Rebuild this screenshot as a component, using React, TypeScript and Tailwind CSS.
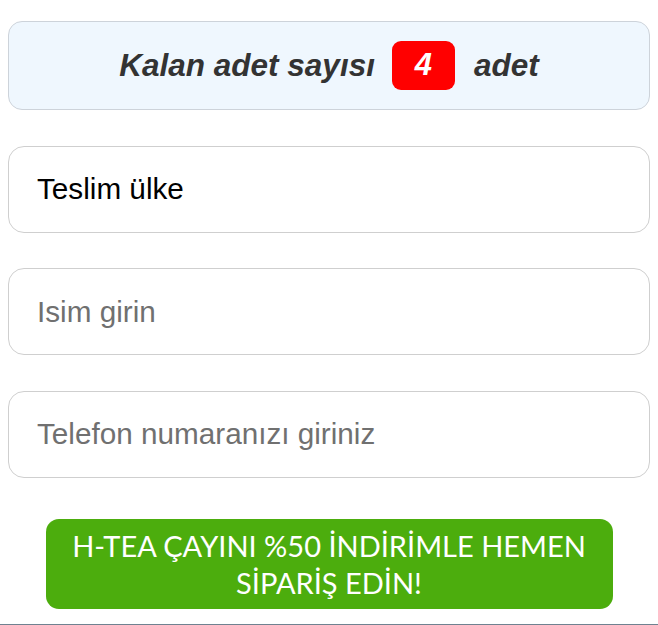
import React from "react";

const fieldCls =
  "w-full h-[87px] rounded-[16px] border border-[#cfcfcf] bg-white px-7 text-[29.7px] text-black placeholder:text-[#707070] outline-none";

export default function App() {
  return (
    <div className="min-h-[625px] w-[658px] bg-white font-['Liberation_Sans',Arial,sans-serif] border-b border-[#6f8290]">
      <div className="flex flex-col gap-[35.5px] px-2 pt-[21px] pb-[10px]">
        <div className="flex h-[89px] items-center justify-center rounded-[14px] border border-[#cdd3da] bg-[#eff7fe]">
          <span className="text-[31.5px] font-bold italic text-[#333]">Kalan adet sayısı</span>
          <span className="ml-[17px] flex h-[49px] w-[63px] items-center justify-center rounded-[9px] bg-[#ff0000] text-[31px] font-bold italic text-white">
            4
          </span>
          <span className="ml-[19px] text-[31.5px] font-bold italic text-[#333]">adet</span>
        </div>

        <div className="flex h-[87px] items-center rounded-[16px] border border-[#cfcfcf] bg-white px-7 text-[29.7px] text-black">
          Teslim ülke
        </div>

        <input className={fieldCls} placeholder="Isim girin" />

        <input className={fieldCls} placeholder="Telefon numaranızı giriniz" />

        <div className="flex justify-center pt-[6px]">
          <button
            type="button"
            className="flex h-[90px] w-[567px] flex-col items-center justify-center rounded-[13px] bg-[#4cad0d] font-['Lato',sans-serif] text-[29px] leading-[37px] text-white"
          >
            <span>H-TEA ÇAYINI %50 İNDİRİMLE HEMEN</span>
            <span>SİPARİŞ EDİN!</span>
          </button>
        </div>
      </div>
    </div>
  );
}
